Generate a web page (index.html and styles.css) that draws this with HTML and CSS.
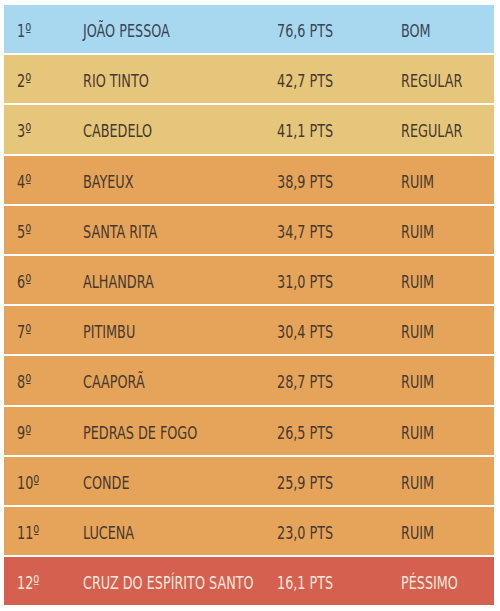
FILE: index.html
```html
<!DOCTYPE html>
<html lang="pt">
<head>
<meta charset="utf-8">
<link rel="stylesheet" href="styles.css">
</head>
<body>
<div class="ranking">
  <div class="row bom"><span>1º</span><span>JOÃO PESSOA</span><span>76,6 PTS</span><span>BOM</span></div>
  <div class="row regular"><span>2º</span><span>RIO TINTO</span><span>42,7 PTS</span><span>REGULAR</span></div>
  <div class="row regular"><span>3º</span><span>CABEDELO</span><span>41,1 PTS</span><span>REGULAR</span></div>
  <div class="row ruim"><span>4º</span><span>BAYEUX</span><span>38,9 PTS</span><span>RUIM</span></div>
  <div class="row ruim"><span>5º</span><span>SANTA RITA</span><span>34,7 PTS</span><span>RUIM</span></div>
  <div class="row ruim"><span>6º</span><span>ALHANDRA</span><span>31,0 PTS</span><span>RUIM</span></div>
  <div class="row ruim"><span>7º</span><span>PITIMBU</span><span>30,4 PTS</span><span>RUIM</span></div>
  <div class="row ruim"><span>8º</span><span>CAAPORÃ</span><span>28,7 PTS</span><span>RUIM</span></div>
  <div class="row ruim"><span>9º</span><span>PEDRAS DE FOGO</span><span>26,5 PTS</span><span>RUIM</span></div>
  <div class="row ruim"><span>10º</span><span>CONDE</span><span>25,9 PTS</span><span>RUIM</span></div>
  <div class="row ruim"><span>11º</span><span>LUCENA</span><span>23,0 PTS</span><span>RUIM</span></div>
  <div class="row pessimo"><span>12º</span><span>CRUZ DO ESPÍRITO SANTO</span><span>16,1 PTS</span><span>PÉSSIMO</span></div>
</div>
</body>
</html>
```
FILE: styles.css
```css
html, body {
  margin: 0;
  padding: 0;
  background: #ffffff;
}
body {
  padding: 5px 6px 0 4px;
}
.ranking {
  width: 490px;
  display: flex;
  flex-direction: column;
  gap: 2px;
  font-family: "DejaVu Sans Condensed", "DejaVu Sans", sans-serif;
  font-size: 18px;
  color: #45392e;
}
.row {
  height: 48.2px;
  display: grid;
  grid-template-columns: 66px 194px 124px 1fr;
  align-items: center;
  padding-left: 13px;
  padding-top: 3px;
  box-sizing: border-box;
}
.row span {
  display: inline-block;
  white-space: nowrap;
  transform: scaleX(0.79);
  transform-origin: left center;
}
.bom { background: #a8d8ef; color: #3a4652; }
.regular { background: #e6c67b; }
.ruim { background: #e6a45a; }
.pessimo { background: #d5604f; color: #f8e8de; }
```
